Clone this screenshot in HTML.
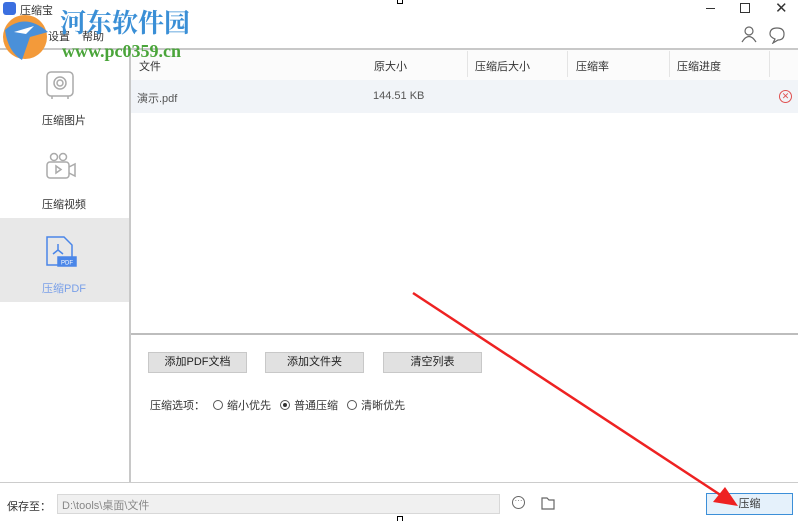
<!DOCTYPE html>
<html><head><meta charset="utf-8"><style>
*{margin:0;padding:0;box-sizing:border-box}
body{width:798px;height:521px;background:#fff;position:relative;overflow:hidden;font-family:"Liberation Sans","Noto Sans CJK SC",sans-serif;font-size:11px;color:#333}
.a{position:absolute}
.btn{position:absolute;top:352px;height:21px;background:#e1e1e1;border:1px solid #c8c8c8;text-align:center;line-height:19px;font-size:11px;color:#222}
.rad{display:inline-block;width:10px;height:10px;border:1px solid #555;border-radius:50%;vertical-align:-1px;margin-right:4px;position:relative}
</style></head><body>
<div class="a" style="left:3px;top:2px;width:13px;height:13px;background:#3b6fe0;border-radius:3px"></div>
<div class="a" style="left:20px;top:2px;font-size:11px">压缩宝</div>
<div class="a" style="left:10px;top:28px;font-size:11px">文件</div>
<div class="a" style="left:48px;top:28px;font-size:11px">设置</div>
<div class="a" style="left:82px;top:28px;font-size:11px">帮助</div>
<!-- window controls -->
<div class="a" style="left:706px;top:8px;width:9px;height:1px;background:#333"></div>
<div class="a" style="left:740px;top:3px;width:10px;height:10px;border:1.5px solid #333"></div>
<div class="a" style="left:775px;top:-1px;font-size:15px">✕</div>
<svg class="a" style="left:740px;top:26px" width="50" height="18" fill="none" stroke="#666" stroke-width="1.2"><circle cx="9" cy="5" r="4"/><path d="M2 16 Q9 5 16 16"/><path d="M35 13 L33 17 L38 14 Q44 14 44 8 Q44 2 37 2 Q30 2 30 8 Q30 11 35 13Z"/></svg>
<!-- lines -->
<div class="a" style="left:0;top:48px;width:798px;height:2px;background:#c8c8c8"></div>
<div class="a" style="left:129px;top:48px;width:2px;height:434px;background:#c8c8c8"></div>
<!-- sidebar -->
<svg class="a" style="left:44px;top:68px" width="36" height="34" fill="none" stroke="#aaa" stroke-width="1.5"><rect x="3" y="4" width="26" height="24" rx="4"/><circle cx="16" cy="15" r="6"/><circle cx="16" cy="15" r="3"/><path d="M8 28 v3 M24 28 v3"/></svg>
<div class="a" style="left:42px;top:112px">压缩图片</div>
<svg class="a" style="left:44px;top:152px" width="36" height="30" fill="none" stroke="#aaa" stroke-width="1.5"><circle cx="10" cy="5" r="3.5"/><circle cx="19" cy="5" r="3.5"/><rect x="3" y="10" width="22" height="16" rx="3"/><path d="M25 15 l6-3 v12 l-6-3"/><path d="M12 14 v7 l5-3.5z"/></svg>
<div class="a" style="left:42px;top:196px">压缩视频</div>
<div class="a" style="left:0;top:218px;width:129px;height:84px;background:#e8e8e8"></div>
<svg class="a" style="left:44px;top:235px" width="36" height="34" fill="none" stroke="#4a86e8" stroke-width="1.5"><path d="M3 2 h17 l8 8 v20 h-25z"/><path d="M14 9 v6 l-5 4 M14 15 l5 4"/><rect x="14" y="22" width="18" height="9" fill="#4a86e8"/><text x="17" y="29.5" font-size="6" fill="#fff" stroke="none">PDF</text></svg>
<div class="a" style="left:42px;top:280px;color:#7aa0e8">压缩PDF</div>
<!-- table -->
<div class="a" style="left:131px;top:50px;width:667px;height:30px;background:#fbfbfb"></div>
<div class="a" style="left:139px;top:58px">文件</div>
<div class="a" style="left:374px;top:58px">原大小</div>
<div class="a" style="left:467px;top:51px;width:1px;height:26px;background:#e4e4e4"></div>
<div class="a" style="left:475px;top:58px">压缩后大小</div>
<div class="a" style="left:567px;top:51px;width:1px;height:26px;background:#e4e4e4"></div>
<div class="a" style="left:576px;top:58px">压缩率</div>
<div class="a" style="left:669px;top:51px;width:1px;height:26px;background:#e4e4e4"></div>
<div class="a" style="left:677px;top:58px">压缩进度</div>
<div class="a" style="left:769px;top:51px;width:1px;height:26px;background:#e4e4e4"></div>
<div class="a" style="left:131px;top:80px;width:667px;height:33px;background:#f1f4f8"></div>
<div class="a" style="left:137px;top:90px;color:#555">演示.pdf</div>
<div class="a" style="left:373px;top:90px;color:#555">144.51 KB</div>
<div class="a" style="left:779px;top:90px;width:13px;height:13px;border:1.3px solid #e05050;border-radius:50%;color:#e05050;font-size:9px;line-height:10px;text-align:center">✕</div>
<!-- bottom panel -->
<div class="a" style="left:131px;top:333px;width:667px;height:2px;background:#bdbdbd"></div>
<div class="btn" style="left:148px;width:99px">添加PDF文档</div>
<div class="btn" style="left:265px;width:99px">添加文件夹</div>
<div class="btn" style="left:383px;width:99px">清空列表</div>
<div class="a" style="left:150px;top:397px">压缩选项：<span class="rad" style="margin-left:8px"></span>缩小优先 <span class="rad" style="margin-left:6px"><span style="position:absolute;left:2px;top:2px;width:4px;height:4px;background:#333;border-radius:50%"></span></span>普通压缩 <span class="rad" style="margin-left:6px"></span>清晰优先</div>
<div class="a" style="left:0;top:482px;width:798px;height:1px;background:#ccc"></div>
<div class="a" style="left:7px;top:498px">保存至：</div>
<div class="a" style="left:57px;top:494px;width:443px;height:20px;background:#f0f0f0;border:1px solid #d8d8d8;color:#888;padding:2px 4px">D:\tools\桌面\文件</div>
<div class="a" style="left:512px;top:496px;width:13px;height:13px;border:1.2px solid #666;border-radius:50%;font-size:8px;line-height:8px;text-align:center;color:#666">···</div>
<svg class="a" style="left:540px;top:495px" width="16" height="16" fill="none" stroke="#666" stroke-width="1.2"><path d="M2 3 h5 l2 2 h5 v9 h-12z"/></svg>
<div class="a" style="left:706px;top:493px;width:87px;height:22px;background:#e5f1fb;border:1px solid #3c8fd8;text-align:center;line-height:20px">压缩</div>
<!-- red arrow -->
<svg class="a" style="left:0;top:0" width="798" height="521"><line x1="413" y1="293" x2="722" y2="496" stroke="#ee2222" stroke-width="2.5"/><path d="M738 506 L713 502 L725 487Z" fill="#ee2222"/></svg>
<!-- watermark on top -->
<svg class="a" style="left:0;top:12px;z-index:5" width="52" height="50"><circle cx="25" cy="25" r="22" fill="#f39a3a"/><path d="M5 18 Q25 0 48 20 L30 25 L22 48 Q8 40 5 18Z" fill="#4a90d9"/><path d="M14 20 L34 14 L26 22Z" fill="#fff"/></svg>
<div class="a" style="left:60px;top:6px;font-size:26px;line-height:32px;font-weight:bold;color:#3a8fd6;font-family:'Noto Serif CJK SC',serif;z-index:5">河东软件园</div>
<div class="a" style="left:62px;top:40px;font-size:18px;line-height:22px;font-weight:bold;color:#4aa53a;font-family:'Liberation Serif',serif;z-index:5">www.pc0359.cn</div>
<div class="a" style="left:397px;top:0;width:6px;height:4px;border:1px solid #000;border-top:none"></div>
<div class="a" style="left:397px;top:516px;width:6px;height:5px;border:1px solid #000;border-bottom:none"></div>
</body></html>
